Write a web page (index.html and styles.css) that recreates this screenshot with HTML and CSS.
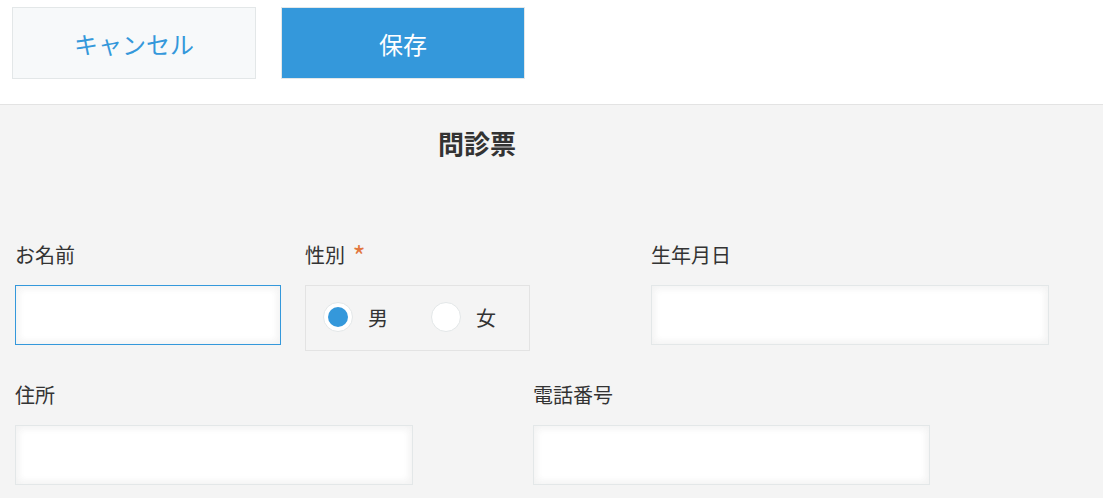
FILE: index.html
```html
<!DOCTYPE html>
<html lang="ja">
<head>
  <meta charset="UTF-8">
  <meta name="viewport" content="width=device-width, initial-scale=1.0">
  <title>問診票</title>
  <link rel="stylesheet" href="styles.css">
</head>
<body>
  <div class="toolbar">
    <button class="btn btn-cancel">キャンセル</button>
    <button class="btn btn-save">保存</button>
  </div>

  <div class="form">
    <div class="form-title">問診票</div>

    <div class="form-row">
      <div class="field field-name">
        <div class="field-label">お名前</div>
        <input type="text" class="text-input focused">
      </div>
      <div class="field field-gender">
        <div class="field-label">性別 <span class="required">*</span></div>
        <div class="radio-box">
          <label class="radio-item"><span class="radio checked"></span>男</label>
          <label class="radio-item"><span class="radio"></span>女</label>
        </div>
      </div>
      <div class="field field-date">
        <div class="field-label">生年月日</div>
        <input type="text" class="text-input">
      </div>
    </div>

    <div class="form-row second">
      <div class="field field-address">
        <div class="field-label">住所</div>
        <input type="text" class="text-input">
      </div>
      <div class="field field-phone">
        <div class="field-label">電話番号</div>
        <input type="text" class="text-input">
      </div>
    </div>
  </div>
</body>
</html>
```

FILE: styles.css
```css
body {
  margin: 0;
  font-family: "Noto Sans CJK JP", "Noto Sans", sans-serif;
  color: #333;
  background: #f4f4f4;
}
.toolbar {
  background: #fff;
  height: 105px;
  box-sizing: border-box;
  padding: 7px 0 0 12px;
  border-bottom: 1px solid #e3e3e3;
  display: flex;
  align-items: flex-start;
  gap: 25px;
}
.btn {
  width: 244px;
  height: 72px;
  border: 1px solid #e3e7e8;
  font-family: inherit;
  font-size: 24px;
  cursor: pointer;
}
.btn-cancel {
  background: #f7f9fa;
  color: #3498db;
}
.btn-save {
  background: #3498db;
  color: #fff;
}
.form {
  padding: 20px 0 20px 15px;
}
.form-title {
  width: 924px;
  text-align: center;
  font-size: 26px;
  font-weight: bold;
  line-height: 36px;
  height: 36px;
  margin-bottom: 80px;
}
.form-row {
  display: flex;
  align-items: flex-start;
}
.form-row.second {
  margin-top: 30px;
}
.field-label {
  font-size: 20px;
  line-height: 28px;
  height: 28px;
  margin-bottom: 16px;
  white-space: nowrap;
}
.required {
  color: #e2773f;
  font-size: 28px;
  line-height: 28px;
  vertical-align: top;
  margin-left: 3px;
}
.text-input {
  display: block;
  box-sizing: border-box;
  height: 60px;
  margin: 0;
  border: 1px solid #e3e7e8;
  background: #fff;
  box-shadow: 1px 1px 10px #f2f2f2 inset, -1px -1px 10px #f2f2f2 inset;
  outline: none;
}
.text-input.focused {
  border-color: #3498db;
}
.field-name {
  width: 290px;
}
.field-name .text-input {
  width: 266px;
}
.field-gender {
  width: 346px;
}
.field-date .text-input {
  width: 398px;
}
.field-address {
  width: 518px;
}
.field-address .text-input {
  width: 398px;
}
.field-phone .text-input {
  width: 397px;
}
.radio-box {
  box-sizing: border-box;
  width: 225px;
  height: 66px;
  margin-top: 2px;
  border: 1px solid #e3e3e3;
  padding: 0 0 2px 17px;
  display: flex;
  align-items: center;
  gap: 43px;
}
.radio-item {
  display: flex;
  align-items: center;
  gap: 15px;
  font-size: 20px;
}
.radio {
  box-sizing: border-box;
  width: 30px;
  height: 30px;
  border-radius: 50%;
  border: 1px solid #e3e7e8;
  background: #fff;
  display: flex;
  align-items: center;
  justify-content: center;
}
.radio.checked::after {
  content: "";
  width: 20px;
  height: 20px;
  border-radius: 50%;
  background: #3498db;
}
```
